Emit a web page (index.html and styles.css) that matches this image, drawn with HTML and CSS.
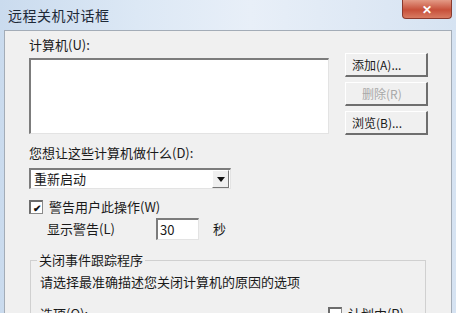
FILE: index.html
```html
<!DOCTYPE html>
<html>
<head>
<meta charset="utf-8">
<title>远程关机对话框</title>
<link rel="stylesheet" href="styles.css">
</head>
<body>
<div class="window">
	<div class="titlebar">
		<span class="title">远程关机对话框</span>
		<span class="close">✕</span>
	</div>
	<div class="client">
		<div class="top">
			<div class="left">
				<div class="label">计算机(U):</div>
				<div class="listbox"></div>
			</div>
			<div class="buttons">
				<div class="btn">添加(A)...</div>
				<div class="btn disabled">删除(R)</div>
				<div class="btn">浏览(B)...</div>
			</div>
		</div>
		<div class="label ask">您想让这些计算机做什么(D):</div>
		<div class="combo">
			<span class="combo-text">重新启动</span>
			<span class="combo-arrow"></span>
		</div>
		<div class="check-row">
			<span class="checkbox">✔</span>
			<span>警告用户此操作(W)</span>
		</div>
		<div class="warn-row">
			<span class="warn-label">显示警告(L)</span>
			<span class="edit">30</span>
			<span class="sec">秒</span>
		</div>
		<fieldset class="group">
			<legend>关闭事件跟踪程序</legend>
			<div class="desc">请选择最准确描述您关闭计算机的原因的选项</div>
			<div class="opt-row">
				<span>选项(O):</span>
				<span class="planned"><span class="checkbox"></span>计划中(P)</span>
			</div>
		</fieldset>
	</div>
</div>
</body>
</html>
```
FILE: styles.css
```css
body{margin:0;width:456px;height:313px;overflow:hidden;background:#dbe6f3;font-family:"Noto Sans CJK SC","Liberation Sans",sans-serif;font-size:13px;color:#1a1a1a;}
.window{height:313px;padding:0 4px;overflow:hidden;background:linear-gradient(90deg,#cadbee 0%,#dce8f5 30%,#e8eff8 55%,#d6e3f2 100%);}
.titlebar{height:30px;display:flex;justify-content:space-between;align-items:flex-start;}
.title{margin:6px 0 0 4px;font-size:14px;line-height:18px;color:#1e2a38;letter-spacing:0.5px;}
.close{width:48px;height:18px;border:1px solid #8a3a2e;border-top:none;border-radius:0 0 4px 4px;background:linear-gradient(#e39a86,#c7503a 55%,#d87b62);color:#fff;font-size:12px;line-height:18px;text-align:center;font-weight:bold;}
.client{height:282px;overflow:hidden;border:1px solid #a3acb7;border-bottom:none;background:#f0f0f0;padding:0 0 0 24px;}
.top{display:flex;}
.left{width:300px;}
.label{margin-top:5px;line-height:18px;}
.listbox{margin-top:4px;height:73px;background:#fff;border:1px solid #e3e3e3;border-left:2px solid #7c7c7c;border-top:2px solid #7c7c7c;}
.buttons{margin:22px 0 0 16px;display:flex;flex-direction:column;gap:5px;}
.btn{width:74px;height:21px;line-height:21px;padding-left:6px;border:1px solid #fff;border-right:2px solid #6e6e6e;border-bottom:2px solid #6e6e6e;background:#f0f0f0;font-size:12px;}
.btn.disabled{color:#a8a8a8;padding-left:16px;width:64px;}
.ask{margin-top:9px;}
.combo{margin-top:6px;width:199px;height:18px;display:flex;background:#fff;border:1px solid #e3e3e3;border-left:2px solid #7c7c7c;border-top:2px solid #7c7c7c;}
.combo-text{flex:1;padding-left:3px;line-height:18px;}
.combo-arrow{width:15px;height:16px;margin:0 1px;border:1px solid #fff;border-right:1px solid #777;border-bottom:1px solid #777;background:#f0f0f0;position:relative;}
.combo-arrow:after{content:"";position:absolute;left:4px;top:6px;border-left:4px solid transparent;border-right:4px solid transparent;border-top:5px solid #111;}
.check-row{margin-top:9px;display:flex;align-items:center;gap:6px;line-height:18px;}
.checkbox{width:11px;height:11px;background:#fff;border:1px solid #8a8a8a;border-top:2px solid #6c6c6c;border-left:2px solid #6c6c6c;font-size:10px;line-height:11px;text-align:center;color:#111;display:inline-block;font-weight:bold;}
.warn-row{margin-top:2px;padding-left:18px;display:flex;align-items:center;line-height:18px;}
.warn-label{width:109px;}
.edit{width:38px;height:19px;line-height:19px;padding-left:2px;background:#fff;border:1px solid #e3e3e3;border-left:2px solid #7c7c7c;border-top:2px solid #7c7c7c;}
.sec{margin-left:14px;}
.group{margin:12px 0 0 1px;width:385px;padding:0 0 0 9px;border:1px solid #d0d0d0;border-bottom:none;height:70px;}
.group legend{padding:0 2px;margin-left:-3px;line-height:16px;}
.desc{line-height:18px;margin-top:5px;}
.opt-row{margin-top:14px;display:flex;justify-content:space-between;line-height:18px;padding-right:21px;}
.planned{display:flex;align-items:center;gap:6px;}
```
